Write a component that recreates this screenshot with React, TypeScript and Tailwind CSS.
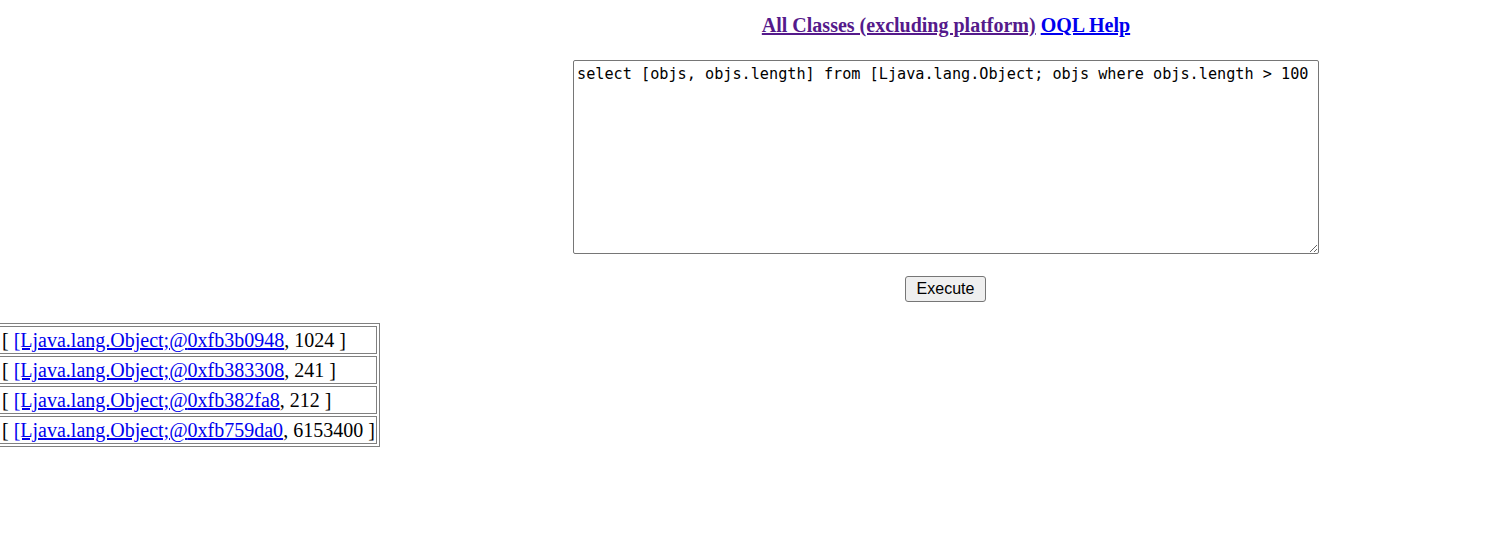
const ROWS = [
  { addr: '0xfb3b0948', len: '1024' },
  { addr: '0xfb383308', len: '241' },
  { addr: '0xfb382fa8', len: '212' },
  { addr: '0xfb759da0', len: '6153400' },
];

const QUERY = 'select [objs, objs.length] from [Ljava.lang.Object; objs where objs.length > 100';

export default function App() {
  return (
    <div className="min-h-[543px] bg-white overflow-hidden font-['Liberation_Serif',serif] text-black">
      <div className="ml-[573px] w-[746px] pt-[13px] flex flex-col items-center">
        <p className="text-[20px] font-bold leading-[24px]">
          <a href="#" className="text-[#551a8b] underline">All Classes (excluding platform)</a>{' '}
          <a href="#" className="text-[#0000ee] underline">OQL Help</a>
        </p>
        <textarea
          defaultValue={QUERY}
          className="mt-[23px] w-[746px] h-[194px] border border-[#767676] rounded-[2px] px-[3px] pt-[4px] pb-[2px] font-['DejaVu_Sans_Mono',monospace] text-[15.2px] leading-[19px] text-black"
        />
        <button className="mt-[22px] mr-[1px] w-[81px] h-[26px] bg-[#efefef] border border-[#767676] rounded-[3px] font-['Liberation_Sans',sans-serif] text-[16px] text-black">
          Execute
        </button>
      </div>
      <table className="mt-[21px] ml-[-4px] border border-[#808080] border-separate border-spacing-[2px] text-[20px] leading-[24px]">
        <tbody>
          {ROWS.map((r) => (
            <tr key={r.addr}>
              <td className="border border-[#808080] pl-[2px] pr-[1px] py-[1px] whitespace-nowrap">
                [ <a href="#" className="text-[#0000ee] underline">[Ljava.lang.Object;@{r.addr}</a>, {r.len} ]
              </td>
            </tr>
          ))}
        </tbody>
      </table>
    </div>
  );
}
